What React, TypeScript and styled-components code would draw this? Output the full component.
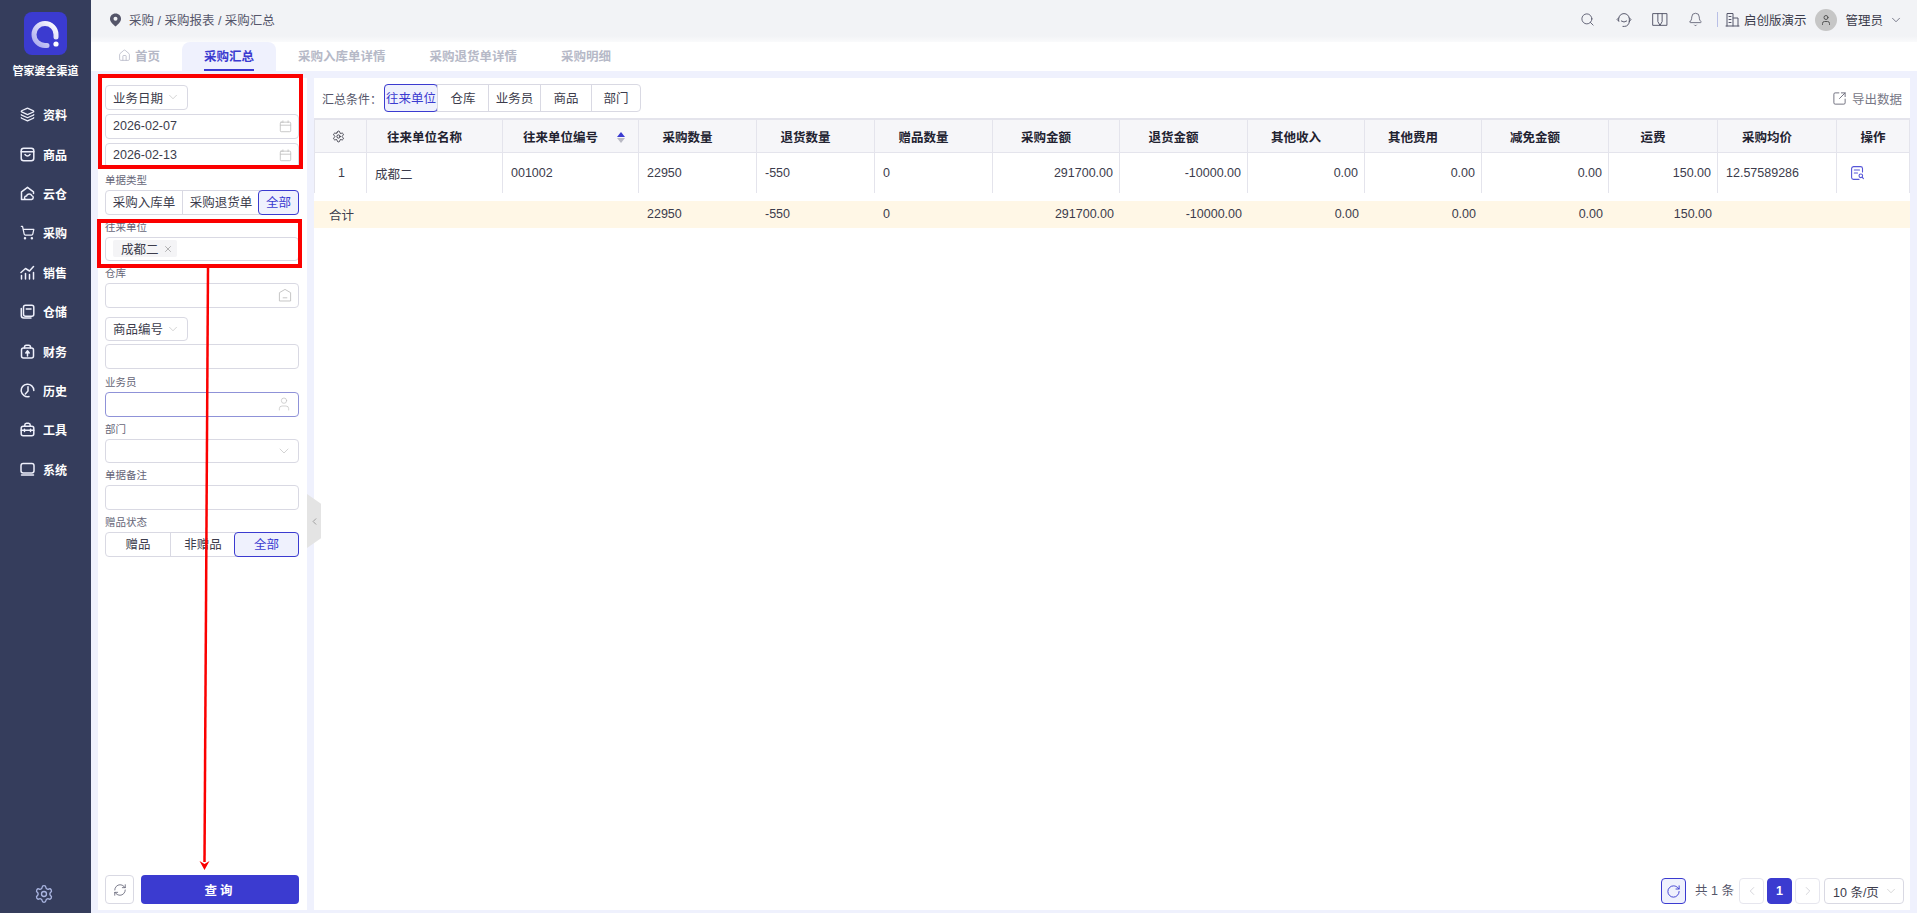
import React, {FC, ReactNode} from 'react'
import styled, {createGlobalStyle} from 'styled-components'
import {
    Layers, ShoppingCart, Settings, Search, Bell, User, ChevronDown, ChevronLeft, ChevronRight,
    House, RefreshCw, RotateCw, SquareArrowOutUpRight, X,
} from 'lucide-react'

const FONT = '"Liberation Sans", "Noto Sans CJK SC", sans-serif'
const PRIMARY = '#3b3bd0'
const LINE = '#d9d9e3'

const GlobalStyle = createGlobalStyle`
  html, body { margin: 0; padding: 0; height: 100%; }
  body { font-family: ${FONT}; font-size: 12.5px; color: #3c3c4c; background: #eff1fd; overflow: hidden; }
  * { box-sizing: border-box; }
`

const Page = styled.div`
  position: relative;
  display: flex;
  width: 1917px;
  height: 913px;
  overflow: hidden;
`

const Sidebar = styled.aside`
  width: 91px;
  flex: none;
  display: flex;
  flex-direction: column;
  align-items: center;
  padding-top: 12px;
  background: #353d5c;
  color: #fff;
`

const LogoBox = styled.div`
  width: 43px;
  height: 43px;
  border-radius: 8px;
  background: #3b3bd0;
  display: flex;
`

const BrandName = styled.div`
  margin-top: 9px;
  font-size: 11px;
  font-weight: 700;
  line-height: 14px;
  white-space: nowrap;
`

const Menu = styled.nav`
  margin-top: 17px;
  display: flex;
  flex-direction: column;
  width: 100%;
`

const MenuRow = styled.div`
  height: 39.4px;
  display: flex;
  align-items: center;
  padding-left: 20px;
  gap: 8px;
  font-size: 12px;
  font-weight: 700;
  svg { flex: none; color: #eef0fb; }
`

const SideFooter = styled.div`
  margin-top: auto;
  margin-bottom: 9px;
  margin-right: 3px;
  color: #a9b4e0;
  display: flex;
`

const Body = styled.div`
  flex: 1;
  min-width: 0;
  display: flex;
  flex-direction: column;
`

const TopBar = styled.header`
  height: 42px;
  flex: none;
  display: flex;
  align-items: center;
  padding: 0 14px 3px 18px;
  background: linear-gradient(#f2f3f6 0 36px, #fff 46px);
  color: #55566a;
`

const Crumb = styled.div`
  display: flex;
  align-items: center;
  gap: 7px;
  font-size: 12.5px;
`

const TopActions = styled.div`
  margin-left: auto;
  display: flex;
  align-items: center;
  color: #55566a;
`

const TopIcon = styled.span`
  width: 36px;
  display: flex;
  justify-content: center;
`

const TopDivider = styled.span`
  width: 1px;
  height: 15px;
  margin: 0 7px 0 3px;
  background: #b9bfe6;
`

const OrgName = styled.span`
  margin-left: 4px;
  color: #3c3c4c;
`

const Avatar = styled.span`
  width: 22px;
  height: 22px;
  margin: 0 4px 0 9px;
  border-radius: 50%;
  background: #c6c6c6;
  color: #555;
  display: grid;
  place-items: center;
`

const Tabs = styled.div`
  height: 29px;
  flex: none;
  display: flex;
  padding-left: 5px;
  background: #fff;
`

const Tab = styled.div<{ $active?: boolean }>`
  position: relative;
  display: flex;
  align-items: center;
  gap: 4px;
  padding: 0 22px 3px;
  font-weight: 700;
  color: ${p => (p.$active ? PRIMARY : '#b6b9c7')};
  background: ${p => (p.$active ? '#eff1fd' : 'transparent')};
  border-radius: 8px 8px 0 0;
  &::after {
    content: '';
    display: ${p => (p.$active ? 'block' : 'none')};
    position: absolute;
    left: 22px;
    right: 22px;
    bottom: 0;
    height: 2px;
    background: ${PRIMARY};
  }
`

const Content = styled.main`
  flex: 1;
  min-height: 0;
  display: flex;
  gap: 7px;
  padding: 7px 7px 3px 7px;
  background: #eff1fd;
`

const FilterPanel = styled.section`
  width: 209px;
  flex: none;
  display: flex;
  flex-direction: column;
  padding: 7px 8px 6px 7px;
  background: #fff;
`

const FieldLabel = styled.label<{ $extra?: number }>`
  display: block;
  height: 12px;
  margin: ${p => 6 + (p.$extra ?? 0)}px 0 4px;
  font-size: 10.5px;
  line-height: 12px;
  color: #666678;
`

const Input = styled.div<{ $focus?: boolean; $mt?: number }>`
  height: 24.5px;
  flex: none;
  margin-top: ${p => p.$mt ?? 0}px;
  display: flex;
  align-items: center;
  padding: 0 6px 0 7px;
  border: 1px solid ${p => (p.$focus ? '#8f92d8' : LINE)};
  border-radius: 4px;
  color: #3c3c4c;
  svg { margin-left: auto; color: #c2c2c2; flex: none; }
`

const SmallSelect = styled(Input)`
  width: 83px;
  svg { margin-left: 3px; color: #b5b5b5; }
`

const Tag = styled.span`
  display: inline-flex;
  align-items: center;
  height: 17px;
  padding: 0 4px 0 8px;
  gap: 4px;
  background: #f4f4f6;
  border-radius: 2px;
  svg { margin: 0; color: #777; }
`

const Segments = styled.div<{ $columns: string; $width?: number; $height?: number }>`
  display: grid;
  grid-template-columns: ${p => p.$columns};
  width: ${p => (p.$width ? `${p.$width}px` : 'auto')};
  height: ${p => p.$height ?? 25}px;
  flex: none;
  border: 1px solid ${LINE};
  border-radius: 4px;
`

const Segment = styled.div<{ $active?: boolean }>`
  display: grid;
  place-items: center;
  padding-bottom: 1px;
  margin: ${p => (p.$active ? '-1px' : '0')};
  white-space: nowrap;
  overflow: hidden;
  border-left: 1px solid ${LINE};
  &:first-child { border-left: none; }
  ${p => p.$active && `
    color: ${PRIMARY};
    background: #eff1fd;
    border: 1px solid ${PRIMARY};
    border-radius: 4px;
    &:first-child { border-left: 1px solid ${PRIMARY}; }
  `}
`

const FilterFooter = styled.div`
  margin-top: auto;
  display: flex;
  gap: 7px;
`

const IconButton = styled.button`
  width: 29px;
  height: 29px;
  padding: 0;
  display: grid;
  place-items: center;
  background: #fff;
  border: 1px solid ${LINE};
  border-radius: 4px;
  color: #55566a;
`

const QueryButton = styled.button`
  flex: 1;
  height: 29px;
  border: none;
  border-radius: 4px;
  background: ${PRIMARY};
  color: #fff;
  font: 700 12.5px ${FONT};
  letter-spacing: 3px;
`

const MainPanel = styled.section`
  flex: 1;
  min-width: 0;
  display: flex;
  flex-direction: column;
  background: #fff;
`

const Toolbar = styled.div`
  height: 40px;
  flex: none;
  display: flex;
  align-items: center;
  padding: 0 8px;
`

const ToolbarLabel = styled.span`
  width: 62px;
  font-size: 12px;
  color: #55566a;
`

const ExportLink = styled.div`
  margin-left: auto;
  display: flex;
  align-items: center;
  gap: 5px;
  color: #777786;
  svg { color: #6d6d7c; }
`

const TableGrid = styled.table`
  width: 1596px;
  table-layout: fixed;
  border-collapse: separate;
  border-spacing: 0;
`

const HeadCell = styled.th<{ $pad?: number }>`
  height: 35px;
  padding: 0 ${p => p.$pad ?? 20}px 0 0;
  font-size: 12.5px;
  font-weight: 700;
  color: #222230;
  background: #f6f6f9;
  border-top: 2px solid #e4e4ec;
  border-bottom: 1px solid #e4e4ec;
  border-right: 1px solid #e4e4ec;
  position: relative;
  &:first-child { border-left: 1px solid #e4e4ec; }
  svg { display: block; margin: 0 auto; }
`

const SortMark = styled.span`
  position: absolute;
  right: 13px;
  top: 12px;
  display: flex;
  flex-direction: column;
  gap: 1px;
  &::before, &::after {
    content: '';
    width: 0;
    height: 0;
    border-left: 4px solid transparent;
    border-right: 4px solid transparent;
  }
  &::before { border-bottom: 5px solid ${PRIMARY}; }
  &::after { border-top: 5px solid #b9b9c4; }
`

const Cell = styled.td<{ $align?: string }>`
  height: 40px;
  padding: 0 6px 0 8px;
  text-align: ${p => p.$align ?? 'left'};
  border-right: 1px solid #e4e4ec;
  color: #3c3c4c;
  &:first-child { border-left: 1px solid #e4e4ec; }
`

const ActionCell = styled(Cell)`
  padding-left: 14px;
  svg { display: block; }
`

const SumCell = styled.td<{ $align?: string }>`
  height: 27px;
  padding: 0 6px 1px 8px;
  text-align: ${p => p.$align ?? 'left'};
  background: #fff7e6;
  color: #3c3c4c;
`

const SumTable = styled(TableGrid)`
  margin-top: 8px;
`

const Pager = styled.div`
  margin-top: auto;
  height: 32px;
  flex: none;
  display: flex;
  align-items: flex-start;
  padding-right: 6px;
  justify-content: flex-end;
`

const PagerButton = styled.div<{ $active?: boolean; $ghost?: boolean }>`
  width: 25px;
  height: 26px;
  display: grid;
  place-items: center;
  border-radius: 4px;
  border: 1px solid ${p => (p.$active ? PRIMARY : p.$ghost ? '#e6e6ee' : LINE)};
  background: ${p => (p.$active ? PRIMARY : '#fff')};
  color: ${p => (p.$active ? '#fff' : '#c4c4cc')};
  font-weight: 700;
`

const PagerRefresh = styled(PagerButton)`
  border-color: ${PRIMARY};
  background: #eff1fd;
  color: ${PRIMARY};
  margin-right: 9px;
`

const PagerTotal = styled.span`
  line-height: 26px;
  margin-right: 5px;
  color: #55566a;
`

const PagerGap = styled.span`
  width: 3px;
`

const PageSize = styled.div`
  width: 80px;
  height: 26px;
  margin-left: 4px;
  display: flex;
  align-items: center;
  justify-content: space-between;
  padding: 0 5px 0 8px;
  border: 1px solid ${LINE};
  border-radius: 4px;
  white-space: nowrap;
  svg { color: #bbb; flex: none; }
`

const CollapseHandle = styled.div`
  position: absolute;
  left: 307px;
  top: 494px;
  width: 14px;
  height: 54px;
  display: grid;
  place-items: center;
  background: #e4e4e4;
  clip-path: polygon(0 0, 100% 18%, 100% 82%, 0 100%);
  color: #999;
`

const RedFrame = styled.div<{ $left: number; $top: number; $width: number; $height: number }>`
  position: absolute;
  left: ${p => p.$left}px;
  top: ${p => p.$top}px;
  width: ${p => p.$width}px;
  height: ${p => p.$height}px;
  border: 4px solid #fb0000;
  pointer-events: none;
`

const ArrowLayer = styled.svg`
  position: absolute;
  left: 0;
  top: 0;
  pointer-events: none;
`

const COLUMN_WIDTHS = [53, 136, 136, 118, 118, 118, 127, 128, 117, 117, 127, 109, 119, 73]

const Columns: FC = () => (
    <colgroup>
        {COLUMN_WIDTHS.map((w, i) => <col key={i} style={{width: w}}/>)}
    </colgroup>
)

const Logo: FC = () => (
    <svg width="43" height="43" viewBox="0 0 43 43" fill="none">
        <defs>
            <linearGradient id="ring" x1="1" y1="0" x2="0" y2="1">
                <stop offset="0" stopColor="#fff"/>
                <stop offset="1" stopColor="#a9a9ee"/>
            </linearGradient>
        </defs>
        <path d="M23 33.500H21A11 11 0 1 1 32 22.500V25" stroke="url(#ring)" strokeWidth="5" strokeLinecap="round"/>
        <circle cx="32" cy="32" r="2.600" fill="#fff"/>
    </svg>
)

// icons that the packages draw differently from the picture
const Glyph: FC<{ size?: number; width?: number; children: ReactNode }> = ({size = 15, width = 1.5, children}) => (
    <svg width={size} height={size} viewBox="0 0 15 15" fill="none" stroke="currentColor" strokeWidth={width}
         strokeLinecap="round" strokeLinejoin="round">
        {children}
    </svg>
)

const MENU: [ReactNode, string][] = [
    [<Layers size={15}/>, '资料'],
    [<Glyph><rect x="1.200" y="1.200" width="12.600" height="12.600" rx="2.500"/><path d="M1.200 4.800H13.800M5 7.500Q7.500 10.500 10 7.500"/></Glyph>, '商品'],
    [<Glyph><path d="M1.500 13.500V5.800L7.500 1.300 13.500 5.800V7.500M1.500 13.500H11.500A2 2 0 0 0 11.800 9.600 2.800 2.800 0 0 0 6.500 10.100 1.800 1.800 0 0 0 5.500 13.500"/></Glyph>, '云仓'],
    [<ShoppingCart size={15}/>, '采购'],
    [<Glyph><path d="M1.500 14V10.500M5.500 14V8.500M9.500 14V9.500M13.500 14V7.500M1 7.500 5.500 3.500 9.500 6 13.500 1.500"/></Glyph>, '销售'],
    [<Glyph><rect x="3.500" y="1.200" width="10.300" height="11" rx="2"/><path d="M1.300 4.500V11.500A2.500 2.500 0 0 0 3.800 14H11M6.300 5H11"/></Glyph>, '仓储'],
    [<Glyph><rect x="1.500" y="4" width="12" height="10" rx="2"/><path d="M4.500 4V3A1.800 1.800 0 0 1 6.300 1.200H8.700A1.800 1.800 0 0 1 10.500 3V4M7.500 12V8M5.800 9 7.500 6.800 9.200 9"/></Glyph>, '财务'],
    [<Glyph><path d="M13.800 7.500A6.300 6.300 0 1 0 9 13.600M8 3.800V8L5.300 11"/></Glyph>, '历史'],
    [<Glyph><rect x="1.200" y="4.300" width="12.600" height="9.500" rx="2"/><path d="M4.800 4.300V3A1.800 1.800 0 0 1 6.500 1.200H8.500A1.800 1.800 0 0 1 10.200 3V4.300M1.200 8.300H13.800M4.500 7.300V9.500M10.500 7.300V9.500"/></Glyph>, '工具'],
    [<Glyph><rect x="1" y="1.500" width="13" height="9.500" rx="2.200"/><path d="M1.500 13H13.500"/></Glyph>, '系统'],
]

const HEADERS = ['往来单位名称', '往来单位编号', '采购数量', '退货数量', '赠品数量', '采购金额', '退货金额', '其他收入', '其他费用', '减免金额', '运费', '采购均价', '操作']

const MONEY = ['291700.00', '-10000.00', '0.00', '0.00', '0.00', '150.00']

const CalendarIcon: FC = () => (
    <Glyph size={13} width={1}><rect x="1.500" y="2.500" width="12" height="11" rx="1"/><path d="M1.500 6H13.500M4.500 1V3M10.500 1V3"/></Glyph>
)

export default function App() {
    return (
        <Page>
            <GlobalStyle/>
            <Sidebar>
                <LogoBox><Logo/></LogoBox>
                <BrandName>管家婆全渠道</BrandName>
                <Menu>
                    {MENU.map(([icon, name]) => (
                        <MenuRow key={name}>{icon}{name}</MenuRow>
                    ))}
                </Menu>
                <SideFooter><Settings size={20} strokeWidth={1.6}/></SideFooter>
            </Sidebar>
            <Body>
                <TopBar>
                    <Crumb>
                        <svg width="13" height="14" viewBox="0 0 13 14">
                            <path d="M6.500 0.500C3.200 0.500 1 3 1 5.800 1 9 4 11.500 6.500 13.500 9 11.500 12 9 12 5.800 12 3 9.800 0.500 6.500 0.500Z" fill="#55566a"/>
                            <circle cx="6.500" cy="5.800" r="2" fill="#f2f3f6"/>
                        </svg>
                        采购 / 采购报表 / 采购汇总
                    </Crumb>
                    <TopActions>
                        <TopIcon><Search size={15} strokeWidth={1.4}/></TopIcon>
                        <TopIcon>
                            <Glyph size={16} width={0.9}>
                                <path d="M2.500 8.500V6.500A5 5 0 0 1 12.500 6.500V9M12.500 9A4.500 4.500 0 0 1 8 13.500H6.500M2.500 5.500 1 7 2.500 8.500M12.500 5.500 14 7 12.500 9M5 8.500Q7.500 10.500 10 8.500"/>
                            </Glyph>
                        </TopIcon>
                        <TopIcon>
                            <Glyph size={16} width={0.9}>
                                <path d="M1 1.500H14V12.500H1ZM5.500 1.500V9L7.500 12.500 9.500 9V1.500"/>
                            </Glyph>
                        </TopIcon>
                        <TopIcon><Bell size={15} strokeWidth={1.3}/></TopIcon>
                        <TopDivider/>
                        <Glyph size={15} width={1}>
                            <path d="M1 14H14M2 14V1.500H8V14M8 6H13V14M4 4.500H6M4 7.500H6M4 10.500H6"/>
                        </Glyph>
                        <OrgName>启创版演示</OrgName>
                        <Avatar><User size={12}/></Avatar>
                        <OrgName>管理员</OrgName>
                        <ChevronDown size={14} strokeWidth={1.3} style={{marginLeft: 6}}/>
                    </TopActions>
                </TopBar>
                <Tabs>
                    <Tab><House size={13} strokeWidth={1.5}/>首页</Tab>
                    <Tab $active>采购汇总</Tab>
                    <Tab>采购入库单详情</Tab>
                    <Tab>采购退货单详情</Tab>
                    <Tab>采购明细</Tab>
                </Tabs>
                <Content>
                    <FilterPanel>
                        <SmallSelect>业务日期<ChevronDown size={14} strokeWidth={1}/></SmallSelect>
                        <Input $mt={4.5}>2026-02-07<CalendarIcon/></Input>
                        <Input $mt={4.5}>2026-02-13<CalendarIcon/></Input>
                        <FieldLabel>单据类型</FieldLabel>
                        <Segments $columns="76px 77px 1fr">
                            <Segment>采购入库单</Segment>
                            <Segment>采购退货单</Segment>
                            <Segment $active>全部</Segment>
                        </Segments>
                        <FieldLabel>往来单位</FieldLabel>
                        <Input><Tag>成都二<X size={10} strokeWidth={1.3}/></Tag></Input>
                        <FieldLabel>仓库</FieldLabel>
                        <Input>
                            <Glyph size={14} width={1}><path d="M1.500 13.500V5L7.500 1.500 13.500 5V13.500ZM5.500 10.500H9.500"/></Glyph>
                        </Input>
                        <SmallSelect $mt={9}>商品编号<ChevronDown size={14} strokeWidth={1}/></SmallSelect>
                        <Input $mt={3}/>
                        <FieldLabel $extra={1.5}>业务员</FieldLabel>
                        <Input $focus><User size={16} strokeWidth={1.1}/></Input>
                        <FieldLabel>部门</FieldLabel>
                        <Input><ChevronDown size={16} strokeWidth={1.1}/></Input>
                        <FieldLabel>单据备注</FieldLabel>
                        <Input/>
                        <FieldLabel>赠品状态</FieldLabel>
                        <Segments $columns="64px 65px 1fr">
                            <Segment>赠品</Segment>
                            <Segment>非赠品</Segment>
                            <Segment $active>全部</Segment>
                        </Segments>
                        <FilterFooter>
                            <IconButton><RefreshCw size={14} strokeWidth={1.3}/></IconButton>
                            <QueryButton>查询</QueryButton>
                        </FilterFooter>
                    </FilterPanel>
                    <MainPanel>
                        <Toolbar>
                            <ToolbarLabel>汇总条件：</ToolbarLabel>
                            <Segments $columns="52px 51px 52px 51px 1fr" $width={257} $height={28}>
                                <Segment $active>往来单位</Segment>
                                <Segment>仓库</Segment>
                                <Segment>业务员</Segment>
                                <Segment>商品</Segment>
                                <Segment>部门</Segment>
                            </Segments>
                            <ExportLink><SquareArrowOutUpRight size={15} strokeWidth={1.5}/>导出数据</ExportLink>
                        </Toolbar>
                        <TableGrid>
                            <Columns/>
                            <thead>
                            <tr>
                                <HeadCell $pad={5}><Settings size={13} strokeWidth={1.5}/></HeadCell>
                                {HEADERS.map((h, i) => (
                                    <HeadCell key={h} $pad={h === '操作' ? 0 : 20}>{h}{i === 1 && <SortMark/>}</HeadCell>
                                ))}
                            </tr>
                            </thead>
                            <tbody>
                            <tr>
                                <Cell $align="center">1</Cell>
                                <Cell>成都二</Cell>
                                <Cell>001002</Cell>
                                <Cell>22950</Cell>
                                <Cell>-550</Cell>
                                <Cell>0</Cell>
                                {MONEY.map((m, i) => <Cell key={i} $align="right">{m}</Cell>)}
                                <Cell>12.57589286</Cell>
                                <ActionCell>
                                    <svg width="13" height="14" viewBox="0 0 13 14" fill="none" stroke="#5555d8" strokeWidth="1.100" strokeLinecap="round">
                                        <path d="M11.500 6V2.500A2 2 0 0 0 9.500 0.600H2.500A2 2 0 0 0 0.600 2.500V11.500A2 2 0 0 0 2.500 13.400H8M3.300 4H8.500M3.300 7H6.500"/>
                                        <circle cx="9.800" cy="9.800" r="1.800"/>
                                        <path d="M11.200 11.200 12.400 12.600"/>
                                    </svg>
                                </ActionCell>
                            </tr>
                            </tbody>
                        </TableGrid>
                        <SumTable>
                            <Columns/>
                            <tbody>
                            <tr>
                                <SumCell $align="center">合计</SumCell>
                                <SumCell/>
                                <SumCell/>
                                <SumCell>22950</SumCell>
                                <SumCell>-550</SumCell>
                                <SumCell>0</SumCell>
                                {MONEY.map((m, i) => <SumCell key={i} $align="right">{m}</SumCell>)}
                                <SumCell/>
                                <SumCell/>
                            </tr>
                            </tbody>
                        </SumTable>
                        <Pager>
                            <PagerRefresh><RotateCw size={15} strokeWidth={1.5}/></PagerRefresh>
                            <PagerTotal>共 1 条</PagerTotal>
                            <PagerButton $ghost><ChevronLeft size={14} strokeWidth={1.2}/></PagerButton>
                            <PagerGap/>
                            <PagerButton $active>1</PagerButton>
                            <PagerGap/>
                            <PagerButton $ghost><ChevronRight size={14} strokeWidth={1.2}/></PagerButton>
                            <PageSize>10 条/页<ChevronDown size={14} strokeWidth={1}/></PageSize>
                        </Pager>
                    </MainPanel>
                </Content>
            </Body>
            <CollapseHandle><ChevronLeft size={11}/></CollapseHandle>
            <RedFrame $left={98} $top={74} $width={205} $height={95}/>
            <RedFrame $left={97} $top={219} $width={205} $height={49}/>
            <ArrowLayer width="1917" height="913" viewBox="0 0 1917 913">
                <path d="M208 268L204.500 862" stroke="#fb0000" strokeWidth="2.500" fill="none"/>
                <path d="M199.500 861L204.500 870 209.500 861 204.500 864Z" fill="#fb0000"/>
            </ArrowLayer>
        </Page>
    )
}
